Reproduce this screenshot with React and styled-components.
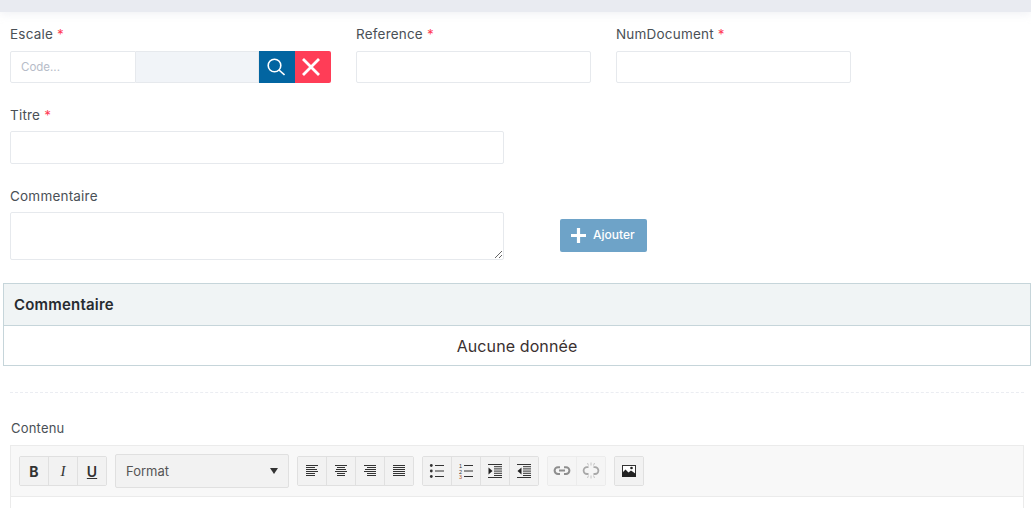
import React from 'react'
import styled, { createGlobalStyle } from 'styled-components'

const GlobalStyle = createGlobalStyle`
  html, body {
    margin: 0;
    padding: 0;
    background: #fff;
    overflow: hidden;
  }
  body {
    font-family: "Inter", "Open Sans", sans-serif;
  }
  * {
    box-sizing: border-box;
  }
`

const lines = (rows) => rows.map(([x1, x2, y], i) => (
  <line key={i} x1={x1} x2={x2} y1={y + 0.5} y2={y + 0.5} stroke="#333" strokeWidth="1" />
))

const AlignIcon = ({ rows }) => (
  <Icon viewBox="0 0 16 16">{lines(rows)}</Icon>
)

const BulletIcon = () => (
  <Icon viewBox="0 0 16 16">
    <circle cx="2.3" cy="2.5" r="1.4" fill="#333" />
    <circle cx="2.3" cy="8" r="1.4" fill="#333" />
    <circle cx="2.3" cy="13.5" r="1.4" fill="#333" />
    {lines([[6, 15, 2], [6, 15, 7.5], [6, 15, 13]])}
  </Icon>
)

const NumberIcon = () => (
  <Icon viewBox="0 0 16 16">
    <NumberText x="1" y="5">1</NumberText>
    <NumberText x="1" y="10.5">2</NumberText>
    <NumberText x="1" y="16" fill="#b0572a">3</NumberText>
    {lines([[6, 15, 2], [6, 15, 7.5], [6, 15, 13]])}
  </Icon>
)

const indentRows = [[1, 15, 1], [7, 15, 3.2], [7, 15, 5.4], [7, 15, 7.6], [7, 15, 9.8], [7, 15, 12], [1, 15, 14]]

const IndentIcon = ({ flip }) => (
  <Icon viewBox="0 0 16 16">
    {lines(indentRows)}
    <path d={flip ? 'M5.5 4.5 L1.5 8 L5.5 11.5 Z' : 'M1.5 4.5 L5.5 8 L1.5 11.5 Z'} fill="#222" />
  </Icon>
)

const LinkIcon = () => (
  <Icon viewBox="0 0 16 16">
    <path d="M6 4.2H4A3.4 3.4 0 0 0 4 11H6M10 4.2H12A3.4 3.4 0 0 1 12 11H10M5 7.6H11" fill="none" stroke="#8e8e8e" strokeWidth="2" />
  </Icon>
)

const UnlinkIcon = () => (
  <Icon viewBox="0 0 16 16">
    <path d="M5.5 4.2H4A3.4 3.4 0 0 0 4 11H5.5M10.5 4.2H12A3.4 3.4 0 0 1 12 11H10.5" fill="none" stroke="#a8a8a8" strokeWidth="1.8" />
    <path d="M8 -0.5V2.5M8 12.5V15.5M4.5 0L5.5 2.5M11.5 0L10.5 2.5M4.5 15L5.5 12.5M11.5 15L10.5 12.5" fill="none" stroke="#c4c4c4" strokeWidth="1" />
  </Icon>
)

const ImageIcon = () => (
  <Icon viewBox="0 0 16 16">
    <rect x="1.5" y="2.5" width="13" height="11" fill="#fff" stroke="#333" />
    <path d="M1 14V10L4.5 6.5L7.5 9.5L10 7.5L15 11V14Z" fill="#222" />
    <circle cx="10.5" cy="5" r="1.3" fill="#222" />
  </Icon>
)

const fields = [
  { label: 'Reference', required: true },
  { label: 'NumDocument', required: true },
]

const alignments = [
  [[2, 14, 2], [2, 11, 4], [2, 13, 6], [2, 14, 8], [2, 11, 10], [2, 11, 12]],
  [[2, 14, 2], [4, 12, 4], [3, 13, 6], [2, 14, 8], [4, 12, 10], [4, 12, 12]],
  [[2, 14, 2], [5, 14, 4], [3, 14, 6], [2, 14, 8], [5, 14, 10], [5, 14, 12]],
  [[2, 14, 2], [2, 14, 4], [2, 14, 6], [2, 14, 8], [2, 14, 10], [2, 14, 12]],
]

export default function App() {
  return (
    <Page>
      <GlobalStyle />
      <TopBar />
      <Form>
        <Row>
          <Field $width={321}>
            <Label>Escale <Star>*</Star></Label>
            <Lookup>
              <CodeInput placeholder="Code..." />
              <NameBox />
              <SearchButton>
                <svg width="18" height="18" viewBox="0 0 18 18">
                  <circle cx="7.5" cy="7.5" r="6.3" fill="none" stroke="#fff" strokeWidth="1.6" />
                  <path d="M12 12L17.5 17" stroke="#fff" strokeWidth="1.6" />
                </svg>
              </SearchButton>
              <ClearButton>
                <svg width="18" height="18" viewBox="0 0 18 18">
                  <path d="M1 1L17 17M17 1L1 17" stroke="#fff" strokeWidth="2.8" />
                </svg>
              </ClearButton>
            </Lookup>
          </Field>
          {fields.map((f) => (
            <Field key={f.label} $width={235}>
              <Label>{f.label} <Star>*</Star></Label>
              <Input />
            </Field>
          ))}
        </Row>
        <TitleField>
          <Label>Titre <Star>*</Star></Label>
          <TitleInput />
        </TitleField>
        <CommentRow>
          <CommentField>
            <Label>Commentaire</Label>
            <Area />
          </CommentField>
          <AddButton>
            <svg width="17" height="17" viewBox="0 0 17 17">
              <path d="M8.5 1V16M1 8.5H16" stroke="#fff" strokeWidth="3.2" />
            </svg>
            <AddText>Ajouter</AddText>
          </AddButton>
        </CommentRow>
      </Form>
      <Table>
        <TableHead>Commentaire</TableHead>
        <TableEmpty>Aucune donnée</TableEmpty>
      </Table>
      <Divider />
      <ContentLabel>Contenu</ContentLabel>
      <Editor>
        <Toolbar>
          <Group>
            <ToolButton><Bold>B</Bold></ToolButton>
            <ToolButton><Italic>I</Italic></ToolButton>
            <ToolButton><Under>U</Under></ToolButton>
          </Group>
          <FormatSelect>
            Format
            <Caret />
          </FormatSelect>
          <Group>
            {alignments.map((rows, i) => (
              <ToolButton key={i}><AlignIcon rows={rows} /></ToolButton>
            ))}
          </Group>
          <Group>
            <ToolButton><BulletIcon /></ToolButton>
            <ToolButton><NumberIcon /></ToolButton>
            <ToolButton><IndentIcon /></ToolButton>
            <ToolButton><IndentIcon flip /></ToolButton>
          </Group>
          <Group $light>
            <ToolButton $light><LinkIcon /></ToolButton>
            <ToolButton $light><UnlinkIcon /></ToolButton>
          </Group>
          <Group>
            <ToolButton><ImageIcon /></ToolButton>
          </Group>
        </Toolbar>
        <EditorBody />
      </Editor>
    </Page>
  )
}

const Page = styled.div`
  width: 1031px;
  height: 508px;
  overflow: hidden;
  background: #fff;
`
const TopBar = styled.div`
  height: 12px;
  background: #e9ebf1;
  box-shadow: 0 2px 10px rgba(233, 235, 241, 0.7);
`
const Form = styled.div`
  padding: 14px 0 0 10px;
`
const Row = styled.div`
  display: flex;
  gap: 25px;
`
const Field = styled.div`
  width: ${props => props.$width}px;
`
const Label = styled.div`
  height: 25px;
  font-size: 13.5px;
  letter-spacing: 0.2px;
  line-height: 16px;
  color: #4a5056;
`
const Star = styled.span`
  color: #ff3d57;
`
const Input = styled.div`
  height: 32px;
  border: 1px solid #e6e9ed;
  border-radius: 2px;
  background: #fff;
`
const Lookup = styled.div`
  display: flex;
  height: 32px;
`
const CodeInput = styled.input`
  width: 126px;
  height: 32px;
  padding: 0 10px;
  border: 1px solid #e6e9ed;
  border-radius: 2px 0 0 2px;
  outline: none;
  font-family: inherit;
  font-size: 11.5px;

  &::placeholder {
    color: #b6bcc8;
    opacity: 1;
  }
`
const NameBox = styled.div`
  width: 123px;
  background: #f1f4f8;
  border: 1px solid #e6e9ed;
  border-left: none;
`
const SearchButton = styled.div`
  width: 36px;
  padding-right: 3px;
  display: flex;
  align-items: center;
  justify-content: center;
  background: #0265a1;
`
const ClearButton = styled.div`
  width: 36px;
  padding-right: 4px;
  display: flex;
  align-items: center;
  justify-content: center;
  background: #ff3d57;
  border-radius: 0 2px 2px 0;
`
const TitleField = styled.div`
  width: 494px;
  margin-top: 24px;
`
const TitleInput = styled(Input)`
  height: 33px;
  margin-top: -1px;
`
const CommentRow = styled.div`
  display: flex;
  align-items: center;
  margin-top: 24px;
`
const CommentField = styled.div`
  width: 494px;
`
const Area = styled.textarea`
  display: block;
  width: 494px;
  height: 48px;
  margin-top: -1px;
  border: 1px solid #e6e9ed;
  border-radius: 2px;
  outline: none;
  background: #fff;
`
const AddButton = styled.div`
  display: flex;
  align-items: center;
  gap: 6px;
  width: 87px;
  height: 33px;
  margin: 23px 0 0 56px;
  padding-left: 10px;
  background: #6ea3c8;
  border-radius: 2px;
  color: #fff;
  font-size: 12px;
  font-weight: 500;
`
const AddText = styled.span`
  padding-bottom: 2px;
`
const Table = styled.div`
  margin: 23px 0 0 3px;
  border: 1px solid #c6d5da;
`
const TableHead = styled.div`
  height: 42px;
  padding-left: 10px;
  display: flex;
  align-items: center;
  background: #f0f4f5;
  border-bottom: 1px solid #c6d5da;
  font-size: 15px;
  letter-spacing: 0.2px;
  font-weight: 600;
  color: #272b30;
`
const TableEmpty = styled.div`
  height: 39px;
  display: flex;
  align-items: center;
  justify-content: center;
  font-size: 16px;
  letter-spacing: 0.1px;
  color: #3a3030;
`
const Divider = styled.div`
  margin: 26px 7px 0 10px;
  border-top: 1px dashed #ebedf2;
`
const ContentLabel = styled.div`
  margin: 27px 0 0 11px;
  height: 25px;
  font-size: 13px;
  letter-spacing: 0.2px;
  line-height: 16px;
  color: #4a5056;
`
const Editor = styled.div`
  margin: 0 7px 0 10px;
  border: 1px solid #ebebeb;
`
const Toolbar = styled.div`
  display: flex;
  align-items: center;
  gap: 8px;
  height: 51px;
  padding-left: 8px;
  background: #f8f8f8;
  border-bottom: 1px solid #ebebeb;
`
const Group = styled.div`
  display: flex;
  height: 30px;
  border: 1px solid ${props => props.$light ? '#ececec' : '#e0e0e0'};
  border-radius: 2px;
`
const ToolButton = styled.div`
  width: 29px;
  display: flex;
  align-items: center;
  justify-content: center;
  background: ${props => props.$light ? '#f5f5f5' : '#f2f2f2'};
  border-left: 1px solid ${props => props.$light ? '#ececec' : '#e0e0e0'};
  color: #333;
  font-size: 14px;

  &:first-child {
    width: 28px;
    border-left: none;
  }
`
const Icon = styled.svg`
  width: 16px;
  height: 16px;
  display: block;
  overflow: visible;
`
const NumberText = styled.text`
  font-size: 5.5px;
  font-family: "Liberation Sans", sans-serif;
  fill: ${props => props.fill || '#333'};
`
const Bold = styled.span`
  font-weight: 700;
`
const Italic = styled.span`
  font-style: italic;
  font-family: "Liberation Serif", serif;
  font-size: 15px;
`
const Under = styled.span`
  font-weight: 600;
  text-decoration: underline;
`
const FormatSelect = styled.div`
  display: flex;
  align-items: center;
  justify-content: space-between;
  width: 174px;
  height: 34px;
  padding: 0 10px;
  background: #f2f2f2;
  border: 1px solid #e0e0e0;
  border-radius: 2px;
  color: #555;
  font-size: 13px;
`
const Caret = styled.span`
  width: 0;
  height: 0;
  border-left: 4px solid transparent;
  border-right: 4px solid transparent;
  border-top: 6px solid #333;
`
const EditorBody = styled.div`
  height: 40px;
  background: #fff;
`
